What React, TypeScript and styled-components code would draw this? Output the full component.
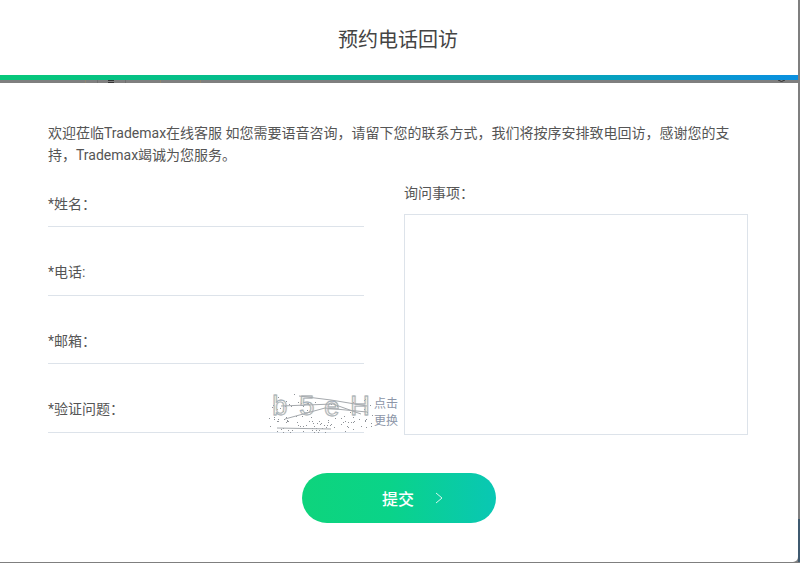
import React from "react";
import styled, { createGlobalStyle } from "styled-components";

const GlobalStyle = createGlobalStyle`
  html, body {
    margin: 0;
    padding: 0;
    background: #7f7f7f;
    overflow: hidden;
  }
  * {
    box-sizing: border-box;
  }
`;

const Backdrop = styled.div`
  position: relative;
  width: 800px;
  height: 563px;
  overflow: hidden;
  background: #7f7f7f;
  font-family: Roboto, "Noto Sans CJK SC", sans-serif;
  color: #555;
`;

// dark page colour that shows beside the modal near the bottom
const BackdropEdge = styled.div`
  position: absolute;
  right: 0;
  top: 519px;
  width: 2px;
  height: 43px;
  background: #3f5a70;
`;

// bits of the page behind the modal, visible in the gap under the header
const BackdropMarks = styled.svg`
  position: absolute;
  left: 0;
  top: 80px;
`;

const Modal = styled.div`
  position: relative;
  width: 798px;
  height: 562px;
  display: flex;
  flex-direction: column;
  border-bottom-right-radius: 5px;
  overflow: hidden;
`;

const Header = styled.header`
  height: 75px;
  flex: none;
  padding: 4px 2px 0 0;
  display: flex;
  align-items: center;
  justify-content: center;
  background: #fff;
`;

const GradientBar = styled.div`
  height: 5px;
  flex: none;
  background: linear-gradient(90deg, #07c87a 0%, #02b59a 50%, #0a90e0 100%);
`;

const Title = styled.h1`
  margin: 0;
  font-size: 20px;
  line-height: 28px;
  font-weight: 400;
  color: #444;
`;

const Body = styled.div`
  flex: 1;
  margin-top: 3px;
  padding: 39px 50px 0 48px;
  background: #fff;
`;

const Intro = styled.p`
  margin: 0;
  font-size: 14px;
  line-height: 22px;
  color: #555;
`;

const Columns = styled.div`
  margin-top: 10px;
  display: grid;
  grid-template-columns: 316px 344px;
  column-gap: 40px;
`;

const FieldList = styled.div`
  display: flex;
  flex-direction: column;
  gap: 22.5px;
  padding-top: 5px;
`;

const Field = styled.label`
  position: relative;
  height: 46px;
  display: flex;
  align-items: center;
  padding-bottom: 2px;
  border-bottom: 1px solid #dde3ea;
  font-size: 14px;
  color: #555;
`;

const FieldInput = styled.input`
  flex: 1;
  min-width: 0;
  height: 100%;
  border: 0;
  outline: 0;
  background: transparent;
`;

const Captcha = styled.div`
  position: absolute;
  right: -34px;
  top: 5px;
  display: flex;
  align-items: center;
  gap: 2px;
`;

const CaptchaHint = styled.span`
  width: 24px;
  margin-left: -1px;
  font-size: 12px;
  line-height: 17px;
  color: #8d96a8;
`;

const Question = styled.div`
  display: flex;
  flex-direction: column;
  padding-top: 7px;
`;

const QuestionLabel = styled.label`
  height: 31px;
  font-size: 14px;
  line-height: 20px;
  color: #555;
`;

const QuestionInput = styled.textarea`
  width: 344px;
  height: 221px;
  padding: 8px;
  resize: none;
  outline: 0;
  border: 1px solid #dde3ea;
  background: #fff;
`;

const Actions = styled.div`
  margin-top: 38px;
  display: flex;
  justify-content: center;
  padding-left: 2px;
`;

const SubmitButton = styled.button`
  width: 194px;
  height: 50px;
  border: 0;
  border-radius: 25px;
  display: flex;
  align-items: center;
  justify-content: center;
  gap: 20px;
  padding-left: 34px;
  background: linear-gradient(90deg, #0ed47c 0%, #0ad389 45%, #09c7b4 100%);
  color: #fff;
  font-family: inherit;
  font-size: 16px;
  font-weight: 500;
`;

// noise of the captcha, denser along the bottom edge
const noise = (n: number) => {
  const v = Math.sin(n * 12.9898) * 43758.5453;
  return v - Math.floor(v);
};
const dots = Array.from({ length: 110 }, (_, i) => ({
  x: Math.floor(noise(i + 1) * 104),
  y: i % 3 === 0 ? Math.floor(noise(i + 200) * 26) + 2 : 25 + Math.floor(noise(i + 200) * 16),
}));

const captchaLetters = [
  { ch: "b", x: 3, y: 23 },
  { ch: "5", x: 30, y: 23 },
  { ch: "e", x: 55, y: 24 },
  { ch: "H", x: 81, y: 23 },
];

function CaptchaImage() {
  return (
    <svg width="104" height="42" viewBox="0 0 104 42">
      {dots.map((d, i) => (
        <rect key={i} x={d.x} y={d.y} width="1" height="1" fill="#8f9398" />
      ))}
      <g fontFamily="Liberation Sans Narrow, Liberation Sans, sans-serif" fontSize="27" fill="none" stroke="#dcc6a4" strokeWidth="0.8">
        {captchaLetters.map((l) => (
          <text key={l.ch} x={l.x + 0.8} y={l.y}>{l.ch}</text>
        ))}
      </g>
      <g fontFamily="Liberation Sans Narrow, Liberation Sans, sans-serif" fontSize="27" fill="none" stroke="#9fb2c6" strokeWidth="0.8">
        {captchaLetters.map((l) => (
          <text key={l.ch} x={l.x} y={l.y}>{l.ch}</text>
        ))}
      </g>
      <g stroke="#a5a9ad" strokeWidth="1" fill="none">
        <path d="M30 4 L62 8 L98 14" />
        <path d="M12 14 L64 12 L92 22" />
        <path d="M16 27 L56 16 L98 20" />
        <path d="M8 36 L62 37" />
      </g>
    </svg>
  );
}

export default function App() {
  return (
    <Backdrop>
      <GlobalStyle />
      <BackdropEdge />
      <BackdropMarks width="800" height="3" viewBox="0 0 800 3">
        <rect x="85" width="1" height="3" fill="#8f8570" />
        <rect x="97" width="1" height="3" fill="#6f6f6f" />
        <rect x="108" y="0" width="6" height="1" fill="#333" />
        <rect x="108" y="2" width="6" height="1" fill="#333" />
        <rect x="125" width="1" height="3" fill="#6f6f6f" />
        <rect x="160" width="1" height="3" fill="#8f8570" />
        <rect x="200" width="1" height="3" fill="#8f8570" />
        <path d="M778 0 Q781.5 3 785 0" fill="none" stroke="#333" />
      </BackdropMarks>
      <Modal>
        <Header>
          <Title>预约电话回访</Title>
        </Header>
        <GradientBar />
        <Body>
          <Intro>
            欢迎莅临Trademax在线客服 如您需要语音咨询，请留下您的联系方式，我们将按序安排致电回访，感谢您的支持，Trademax竭诚为您服务。
          </Intro>
          <Columns>
            <FieldList>
              <Field>
                *姓名：
                <FieldInput />
              </Field>
              <Field>
                *电话:
                <FieldInput />
              </Field>
              <Field>
                *邮箱：
                <FieldInput />
              </Field>
              <Field>
                *验证问题：
                <FieldInput />
                <Captcha>
                  <CaptchaImage />
                  <CaptchaHint>点击更换</CaptchaHint>
                </Captcha>
              </Field>
            </FieldList>
            <Question>
              <QuestionLabel>询问事项：</QuestionLabel>
              <QuestionInput />
            </Question>
          </Columns>
          <Actions>
            <SubmitButton type="button">
              提交
              <svg width="10" height="12" viewBox="0 0 10 12" fill="none" stroke="#d8f7ee" strokeWidth="1">
                <path d="M2 1 L8 6 L2 11" />
              </svg>
            </SubmitButton>
          </Actions>
        </Body>
      </Modal>
    </Backdrop>
  );
}
